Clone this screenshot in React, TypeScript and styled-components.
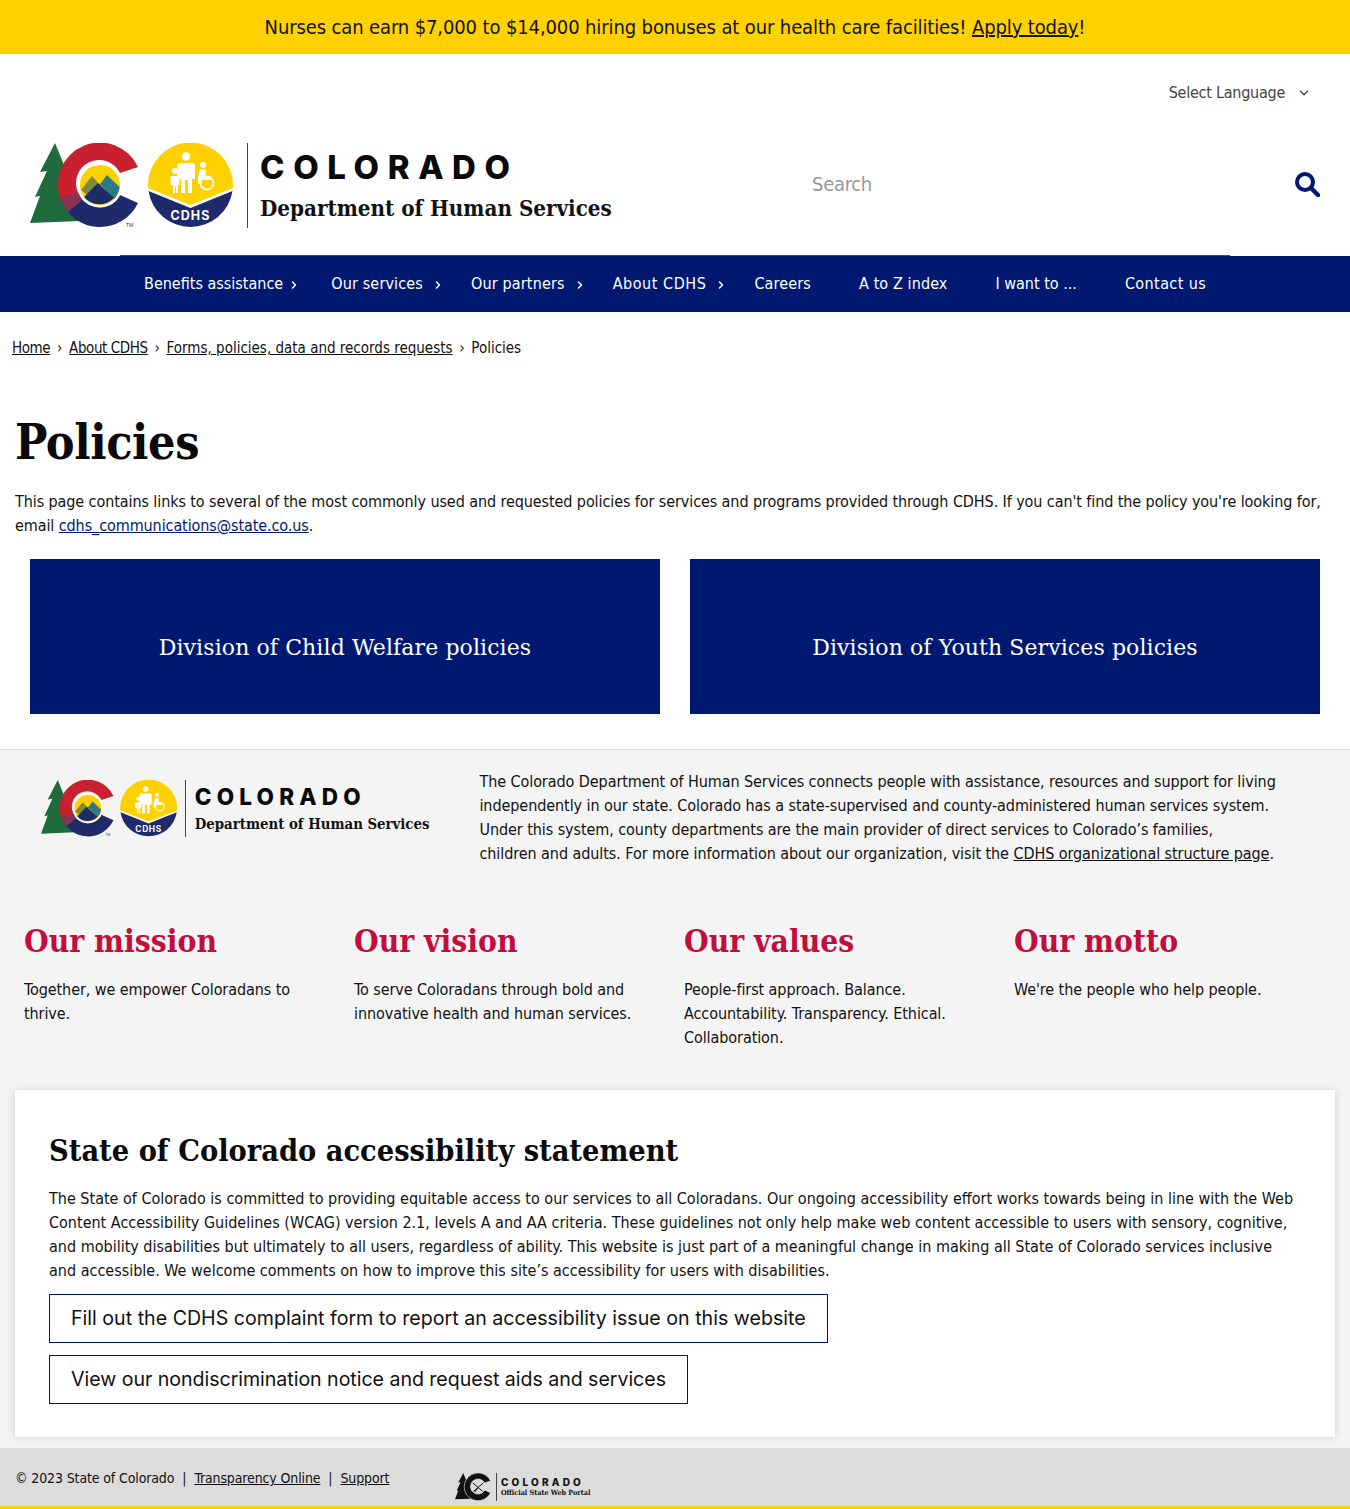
import React from 'react';
import styled, { createGlobalStyle } from 'styled-components';
import { ChevronDown, ChevronRight } from 'lucide-react';

const navy = '#001970';
const gold = '#ffd100';
const crimson = '#c10e3a';
const bodyFont = '"DejaVu Sans", sans-serif';
const serifFont = '"DejaVu Serif", serif';
const displayFont = 'Inter, "Open Sans", sans-serif';

const GlobalStyle = createGlobalStyle`
  html, body {
    margin: 0;
    padding: 0;
    background: #fff;
  }
  body {
    font-family: ${bodyFont};
    font-stretch: condensed;
    font-size: 16px;
    line-height: 24px;
    color: #111;
  }
  a {
    color: inherit;
  }
`;

// Banner
const Banner = styled.div`
  height: 54px;
  background: ${gold};
  display: flex;
  align-items: center;
  justify-content: center;
  font-size: 20px;
  letter-spacing: -0.12px;
`;

// Top of the header
const LanguageRow = styled.div`
  height: 76px;
  display: flex;
  justify-content: flex-end;
  align-items: flex-start;
  padding: 27px 39px 0 0;
  box-sizing: border-box;
`;

const LanguageLabel = styled.div`
  display: flex;
  align-items: center;
  gap: 12px;
  color: #444;
  line-height: 24px;
  letter-spacing: -0.25px;
`;

const HeaderRow = styled.header`
  height: 126px;
  display: flex;
  align-items: flex-start;
  justify-content: space-between;
  padding: 13px 30px 0;
  box-sizing: border-box;
`;

const SearchBox = styled.div`
  width: 508px;
  height: 82px;
  display: flex;
  align-items: center;
  justify-content: space-between;
  color: #999;
  font-size: 20px;
  letter-spacing: -0.3px;
`;

const SearchIcon = styled.svg`
  width: 25px;
  height: 25px;
  color: ${navy};
`;

// Logo
const LogoWrap = styled.div<{ $height: number; $top?: number }>`
  display: flex;
  align-items: stretch;
  height: ${p => p.$height}px;
  margin-top: ${p => p.$top || 0}px;
`;

const LogoDivider = styled.div<{ $before: number; $after: number }>`
  width: 1px;
  background: #444;
  margin: 0 ${p => p.$after}px 0 ${p => p.$before}px;
`;

const LogoText = styled.div<{ $gap: number }>`
  display: flex;
  flex-direction: column;
  justify-content: center;
  gap: ${p => p.$gap}px;
`;

const LogoState = styled.div<{ $size: number; $spacing: number }>`
  font-family: ${displayFont};
  font-weight: 800;
  font-size: ${p => p.$size}px;
  letter-spacing: ${p => p.$spacing}px;
  line-height: 1.2;
  color: #0a0a0a;
`;

const LogoDept = styled.div<{ $size: number }>`
  font-family: ${serifFont};
  font-weight: 700;
  font-size: ${p => p.$size}px;
  line-height: 1.3;
  color: #111;
  white-space: nowrap;
`;

const TREE = 'M25 0 L10 29 L17 28 L5 54 L10 53 L0 80 L50 78 L38 40 L34 22 Z';

const ColoradoMark = () => (
  <>
    <path d={TREE} fill="#1f6b3c" />
    <path d="M108 24 A42 42 0 0 0 30.4 56 L48.3 50 A23 23 0 0 1 90 30 Z" fill="#c8202f" />
    <path d="M30.4 56 A42 42 0 0 0 108 60 L90 52 A23 23 0 0 1 48.3 50 Z" fill="#1f2a6b" />
    <path d="M30.4 56 L48.3 50 L52 57 L38 69 A42 42 0 0 1 30.4 56 Z" fill="#8a3553" />
    <circle cx="70" cy="42" r="22.5" fill="#fff" />
    <circle cx="70" cy="42" r="20" fill={gold} />
    <path d="M51 47 L62 33 L71 43 L60 54 Z" fill="#7d8b3a" />
    <path d="M70 41 L77 32 L89.5 44 A20 20 0 0 1 84 56 Z" fill="#2b7a8c" />
    <path d="M54 54 L68 40 L84 55 A20 20 0 0 1 54 54 Z" fill="#1f2a6b" />
  </>
);

const MonoMark = () => (
  <>
    <path d={TREE} fill="#111" />
    <path d="M108 24 A42 42 0 1 0 108 60 L90 52 A23 23 0 1 1 90 30 Z" fill="#111" stroke="#dcdcdc" strokeWidth="2" />
    <circle cx="70" cy="42" r="20" fill="#dcdcdc" />
    <path d="M54 30 L84 56 M86 30 L56 56 M70 44 L60 58" fill="none" stroke="#111" strokeWidth="3" />
  </>
);

const FullLogo = () => (
  <svg viewBox="0 0 204 85" height="100%" aria-hidden="true">
    <ColoradoMark />
    <text x="96" y="84" fontSize="5" fontFamily="Liberation Sans" fill="#333">
      TM
    </text>
    <path d="M118 42 A42.5 42.5 0 0 1 203 42 L203 45 L160.5 62 L118 45 Z" fill={gold} />
    <path d="M118.5 48 L160.5 65 L202.5 48 A42.5 42.5 0 0 1 118.5 48 Z" fill="#1f2a6b" />
    <g fill="#fff">
      <circle cx="156" cy="13.5" r="4.2" />
      <path d="M149 20 H163 Q165 20 165 23 V36 H162 V50 H158 V37 H155 V50 H151 V36 H147 V23 Q147 20 149 20 Z" />
      <circle cx="145" cy="28" r="3" />
      <path d="M140.5 33 H149.5 V42 H148 V50 H146 V43 H145 V50 H143 V42 H140.5 Z" />
      <circle cx="173" cy="22" r="3" />
      <path d="M170 26.5 H175.5 V34 H181 V37 H172 V41 H168 V34 Z" />
    </g>
    <circle cx="177" cy="40" r="6.5" fill="none" stroke="#fff" strokeWidth="1.8" />
    <text
      x="160.5"
      y="77"
      fontSize="12.5"
      fontWeight="700"
      letterSpacing="1"
      textAnchor="middle"
      fontFamily="Inter, sans-serif"
      fill="#fff"
    >
      CDHS
    </text>
  </svg>
);

// Navigation
const NavBar = styled.nav`
  height: 56px;
  background: ${navy};
`;

const NavList = styled.ul`
  list-style: none;
  margin: 0 auto;
  padding: 0;
  width: 1110px;
  height: 56px;
  display: flex;
  box-shadow: 0 -1px 0 #3a4a86;
`;

const NavItem = styled.li<{ $spacing: number }>`
  position: relative;
  display: flex;
  align-items: center;
  padding: 0 24px;
  color: #fff;
  white-space: nowrap;
  letter-spacing: ${p => p.$spacing}px;
`;

const NavChevron = styled.span<{ $right: number }>`
  position: absolute;
  right: ${p => p.$right}px;
  top: 23px;
  display: flex;
  color: #fff;
`;

// Main content
const Crumbs = styled.div`
  display: flex;
  align-items: center;
  padding: 24px 12px 0;
  font-size: 15px;
  height: 24px;
`;

const CrumbLink = styled.a<{ $tight?: boolean }>`
  letter-spacing: ${p => (p.$tight ? '-0.4px' : '0')};
`;

const CrumbSep = styled.span`
  margin: 0 6.7px;
`;

const Main = styled.main`
  padding: 51px 15px 35px;
`;

const PageTitle = styled.h1`
  margin: 0 0 17px;
  font-family: ${serifFont};
  font-size: 48px;
  line-height: 62px;
  font-weight: 700;
  letter-spacing: -0.4px;
  color: #0a0a0a;
`;

const Intro = styled.p`
  margin: 0 0 21px;
  letter-spacing: -0.09px;
`;

const NavyLink = styled.a`
  color: ${navy};
`;

const CardGrid = styled.div`
  display: grid;
  grid-template-columns: 630px 630px;
  gap: 30px;
  padding: 0 15px;
`;

const PolicyCard = styled.a`
  height: 155px;
  background: ${navy};
  color: #fff;
  display: flex;
  align-items: center;
  justify-content: center;
  padding-top: 22px;
  box-sizing: border-box;
  font-family: ${serifFont};
  font-stretch: normal;
  font-size: 22px;
  letter-spacing: 0.1px;
  text-decoration: none;
`;

// Grey footer
const FooterArea = styled.footer`
  background: #f4f4f4;
  border-top: 1px solid #ddd;
`;

const AboutRow = styled.div`
  display: flex;
  padding: 20px 0 0 41px;
  gap: 50px;
`;

const AboutText = styled.p`
  margin: 0;
  width: 800px;
  letter-spacing: -0.07px;
`;

const ValuesGrid = styled.div`
  display: grid;
  grid-template-columns: repeat(4, 330px);
  padding: 53px 0 0 9px;
`;

const ValueColumn = styled.section`
  padding: 0 30px 0 15px;
`;

const ValueTitle = styled.h2`
  margin: 0 0 15px;
  font-family: ${serifFont};
  font-size: 31.5px;
  line-height: 44px;
  font-weight: 700;
  color: ${crimson};
`;

const ValueText = styled.p`
  margin: 0;
  letter-spacing: -0.08px;
`;

const StatementCard = styled.section`
  margin: 40px 15px 0;
  background: #fff;
  padding: 35px 34px 33px;
  box-shadow: 0 0 8px rgba(0, 0, 0, 0.15);
  height: 347px;
  box-sizing: border-box;
`;

const StatementTitle = styled.h2`
  margin: 0 0 10px;
  font-family: ${serifFont};
  font-size: 30.4px;
  line-height: 50px;
  padding-bottom: 2px;
  font-weight: 700;
  color: #0a0a0a;
`;

const StatementText = styled.p`
  margin: 0 0 11px;
`;

const OutlineButton = styled.a<{ $spacing: number }>`
  display: table;
  margin-bottom: 12px;
  border: 1px solid ${navy};
  padding: 0 21px;
  font-family: ${displayFont};
  font-size: 19.6px;
  letter-spacing: ${p => p.$spacing}px;
  line-height: 47px;
  color: #111;
  text-decoration: none;
`;

const LegalBar = styled.div`
  margin-top: 11px;
  height: 40px;
  background: #dcdcdc;
  border-bottom: 3px solid ${gold};
  display: flex;
  padding: 18px 0 0 15px;
  font-size: 14px;
  letter-spacing: -0.13px;
`;

const LegalText = styled.div`
  width: 440px;
  line-height: 24px;
`;

const Sep = styled.span`
  margin: 0 8px;
`;

const PortalLogo = styled.div`
  display: flex;
  align-items: stretch;
  height: 28px;
  margin-top: 7px;
`;

const PortalText = styled.div`
  display: flex;
  flex-direction: column;
  justify-content: center;
`;

const PortalState = styled.div`
  font-family: ${displayFont};
  font-weight: 800;
  font-size: 10px;
  letter-spacing: 3.2px;
  line-height: 12px;
`;

const PortalSub = styled.div`
  font-family: ${serifFont};
  font-weight: 700;
  font-size: 7.2px;
  letter-spacing: 0;
  line-height: 10px;
  white-space: nowrap;
`;

const navItems: { label: string; spacing: number; chevron?: number }[] = [
  { label: 'Benefits assistance', spacing: 0, chevron: 7 },
  { label: 'Our services', spacing: 0.15, chevron: 3 },
  { label: 'Our partners', spacing: 0.15, chevron: 3 },
  { label: 'About CDHS', spacing: 0.55, chevron: 3 },
  { label: 'Careers', spacing: 0.15 },
  { label: 'A to Z index', spacing: 0.1 },
  { label: 'I want to ...', spacing: 0 },
  { label: 'Contact us', spacing: 0.4 },
];

const values = [
  { title: 'Our mission', text: 'Together, we empower Coloradans to thrive.' },
  { title: 'Our vision', text: 'To serve Coloradans through bold and innovative health and human services.' },
  { title: 'Our values', text: 'People-first approach. Balance. Accountability. Transparency. Ethical. Collaboration.' },
  { title: 'Our motto', text: "We're the people who help people." },
];

const App = () => (
  <>
    <GlobalStyle />
    <Banner>
      <span>
        Nurses can earn $7,000 to $14,000 hiring bonuses at our health care facilities! <a href="#">Apply today</a>!
      </span>
    </Banner>

    <LanguageRow>
      <LanguageLabel>
        Select Language <ChevronDown size={14} strokeWidth={2.5} />
      </LanguageLabel>
    </LanguageRow>

    <HeaderRow>
      <LogoWrap $height={85}>
        <FullLogo />
        <LogoDivider $before={13} $after={12} />
        <LogoText $gap={6}>
          <LogoState $size={33} $spacing={8.6}>COLORADO</LogoState>
          <LogoDept $size={22.2}>Department of Human Services</LogoDept>
        </LogoText>
      </LogoWrap>
      <SearchBox>
        Search
        <SearchIcon viewBox="0 0 25 25" aria-hidden="true">
          <circle cx="10" cy="10" r="8" fill="none" stroke="currentColor" strokeWidth="4" />
          <path d="M16 16 L23 23" stroke="currentColor" strokeWidth="4.5" strokeLinecap="round" />
        </SearchIcon>
      </SearchBox>
    </HeaderRow>

    <NavBar>
      <NavList>
        {navItems.map(item => (
          <NavItem key={item.label} $spacing={item.spacing}>
            {item.label}
            {item.chevron && (
              <NavChevron $right={item.chevron}>
                <ChevronRight size={12} strokeWidth={3} />
              </NavChevron>
            )}
          </NavItem>
        ))}
      </NavList>
    </NavBar>

    <Crumbs>
      <CrumbLink href="#" $tight>Home</CrumbLink>
      <CrumbSep>›</CrumbSep>
      <CrumbLink href="#" $tight>About CDHS</CrumbLink>
      <CrumbSep>›</CrumbSep>
      <CrumbLink href="#">Forms, policies, data and records requests</CrumbLink>
      <CrumbSep>›</CrumbSep>
      <span>Policies</span>
    </Crumbs>

    <Main>
      <PageTitle>Policies</PageTitle>
      <Intro>
        This page contains links to several of the most commonly used and requested policies for services and programs
        provided through CDHS. If you can't find the policy you're looking for, email{' '}
        <NavyLink href="#">cdhs_communications@state.co.us</NavyLink>.
      </Intro>
      <CardGrid>
        <PolicyCard href="#">Division of Child Welfare policies</PolicyCard>
        <PolicyCard href="#">Division of Youth Services policies</PolicyCard>
      </CardGrid>
    </Main>

    <FooterArea>
      <AboutRow>
        <LogoWrap $height={57} $top={10}>
          <FullLogo />
          <LogoDivider $before={7} $after={9} />
          <LogoText $gap={4}>
            <LogoState $size={22.5} $spacing={5.2}>COLORADO</LogoState>
            <LogoDept $size={14.8}>Department of Human Services</LogoDept>
          </LogoText>
        </LogoWrap>
        <AboutText>
          The Colorado Department of Human Services connects people with assistance, resources and support for living
          independently in our state. Colorado has a state-supervised and county-administered human services system.
          Under this system, county departments are the main provider of direct services to Colorado’s families,
          <br />
          children and adults. For more information about our organization, visit the{' '}
          <a href="#">CDHS organizational structure page</a>.
        </AboutText>
      </AboutRow>

      <ValuesGrid>
        {values.map(v => (
          <ValueColumn key={v.title}>
            <ValueTitle>{v.title}</ValueTitle>
            <ValueText>{v.text}</ValueText>
          </ValueColumn>
        ))}
      </ValuesGrid>

      <StatementCard>
        <StatementTitle>State of Colorado accessibility statement</StatementTitle>
        <StatementText>
          The State of Colorado is committed to providing equitable access to our services to all Coloradans. Our ongoing
          accessibility effort works towards being in line with the Web Content Accessibility Guidelines (WCAG) version
          2.1, levels A and AA criteria. These guidelines not only help make web content accessible to users with
          sensory, cognitive, and mobility disabilities but ultimately to all users, regardless of ability. This website
          is just part of a meaningful change in making all State of Colorado services inclusive and accessible. We
          welcome comments on how to improve this site’s accessibility for users with disabilities.
        </StatementText>
        <OutlineButton href="#" $spacing={0.01}>
          Fill out the CDHS complaint form to report an accessibility issue on this website
        </OutlineButton>
        <OutlineButton href="#" $spacing={-0.04}>
          View our nondiscrimination notice and request aids and services
        </OutlineButton>
      </StatementCard>

      <LegalBar>
        <LegalText>
          © 2023 State of Colorado<Sep>|</Sep>
          <a href="#">Transparency Online</a>
          <Sep>|</Sep>
          <a href="#">Support</a>
        </LegalText>
        <PortalLogo>
          <svg viewBox="0 0 112 85" height="28" aria-hidden="true">
            <MonoMark />
          </svg>
          <LogoDivider $before={4} $after={4} />
          <PortalText>
            <PortalState>COLORADO</PortalState>
            <PortalSub>Official State Web Portal</PortalSub>
          </PortalText>
        </PortalLogo>
      </LegalBar>
    </FooterArea>
  </>
);

export default App;
